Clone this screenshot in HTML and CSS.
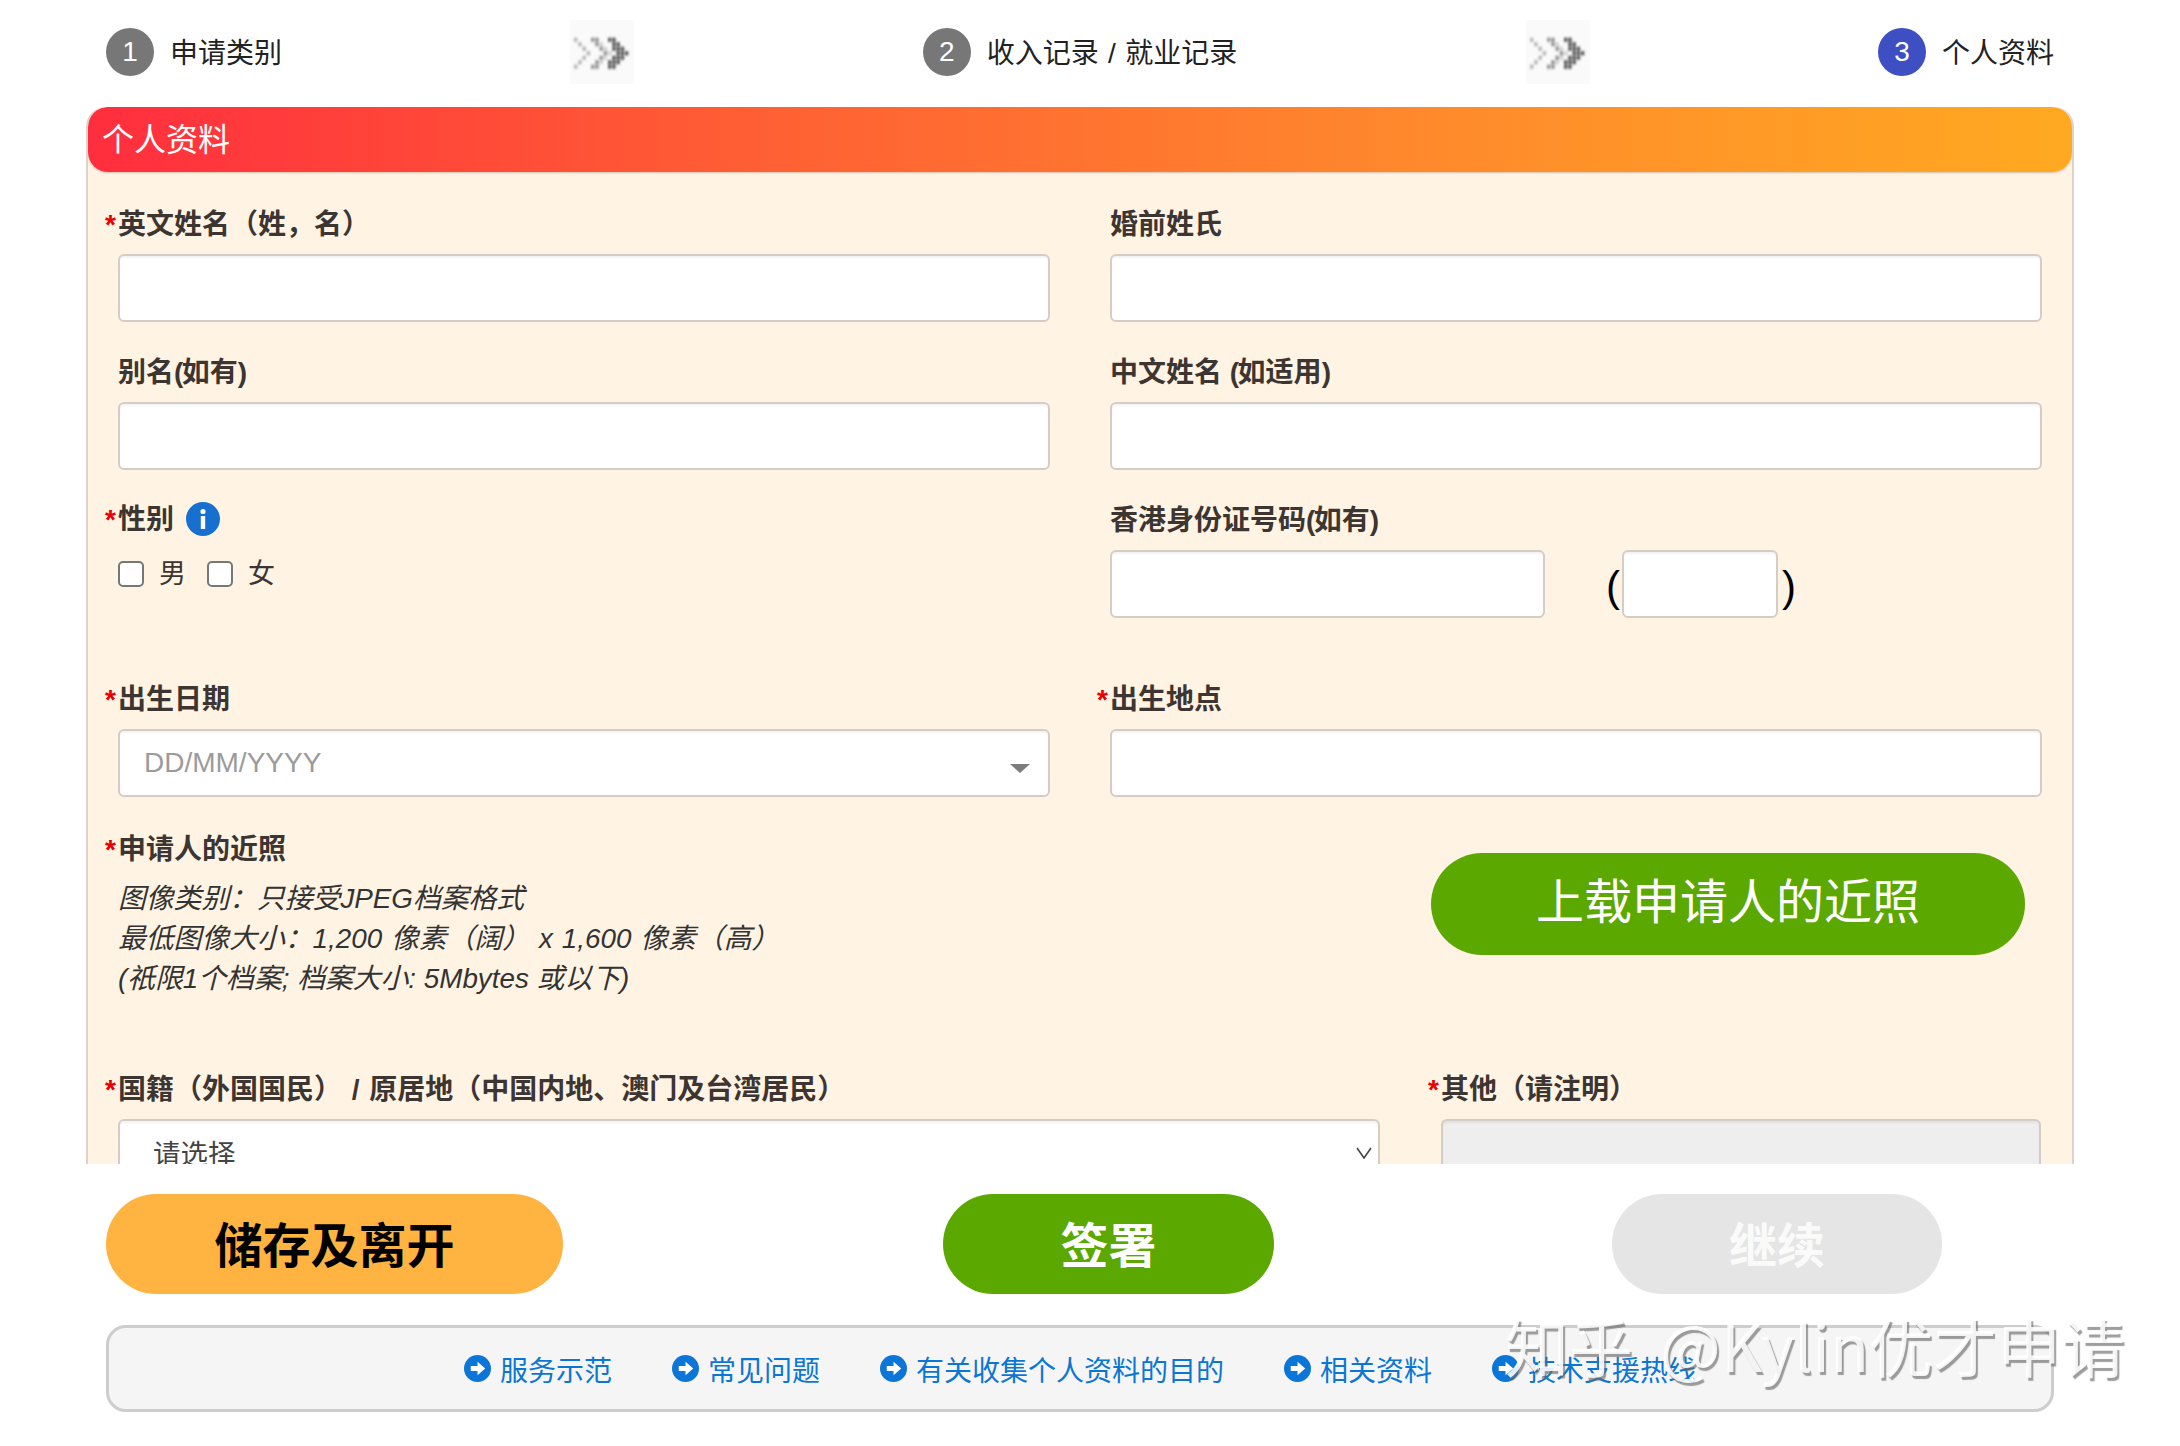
FILE: index.html
```html
<!DOCTYPE html>
<html lang="zh-CN">
<head>
<meta charset="utf-8">
<title>个人资料</title>
<link rel="stylesheet" href="styles.css">
</head>
<body>
<svg class="defs" width="0" height="0" aria-hidden="true">
  <symbol id="chev" viewBox="0 0 64 64">
    <rect width="64" height="64" fill="#fafafa"/>
    <g class="chev-dots" transform="translate(4 18) scale(4.25 4.5)">
      <path fill="#a8a8a8" d="M0 0h.8v.8h-.8zM1 1h.8v.8h-.8zM2 2h.8v.8h-.8zM3 3h.8v.8h-.8zM2 4h.8v.8h-.8zM1 5h.8v.8h-.8zM0 6h.8v.8h-.8z"/>
      <path fill="#c8c8c8" d="M6 1h.8v.8h-.8zM7 2h.8v.8h-.8zM8 3h.8v.8h-.8zM7 4h.8v.8h-.8zM6 5h.8v.8h-.8z"/>
      <path fill="#808080" d="M4 0h.8v.8h-.8zM5 0h.8v.8h-.8zM5 1h.8v.8h-.8zM6 2h.8v.8h-.8zM7 3h.8v.8h-.8zM6 4h.8v.8h-.8zM5 5h.8v.8h-.8zM4 6h.8v.8h-.8zM5 6h.8v.8h-.8z"/>
      <path fill="#3c3c3c" d="M8 0h.8v.8h-.8zM9 0h.8v.8h-.8zM9 1h.8v.8h-.8zM10 1h.8v.8h-.8zM9 2h.8v.8h-.8zM10 2h.8v.8h-.8zM11 2h.8v.8h-.8zM10 3h.8v.8h-.8zM11 3h.8v.8h-.8zM12 3h.8v.8h-.8zM9 4h.8v.8h-.8zM10 4h.8v.8h-.8zM11 4h.8v.8h-.8zM8 5h.8v.8h-.8zM9 5h.8v.8h-.8zM10 5h.8v.8h-.8zM8 6h.8v.8h-.8zM9 6h.8v.8h-.8z"/>
    </g>
  </symbol>
  <symbol id="go" viewBox="0 0 28 28">
    <circle cx="14" cy="14" r="14" fill="#0b76d8"/>
    <path d="M7 11.5h7V7l8 7-8 7v-4.500H7z" fill="#fff"/>
  </symbol>
</svg>
<div class="page">
  <nav class="steps">
    <div class="step"><span class="num">1</span><span class="step-text">申请类别</span></div>
    <svg class="chev"><use href="#chev"/></svg>
    <div class="step"><span class="num">2</span><span class="step-text step-wide">收入记录 / 就业记录</span></div>
    <svg class="chev"><use href="#chev"/></svg>
    <div class="step"><span class="num num-on">3</span><span class="step-text">个人资料</span></div>
  </nav>

  <section class="panel">
    <h1 class="panel-title">个人资料</h1>
    <form class="form">
      <div class="row two">
        <div class="field"><div class="label"><i class="star">*</i>英文姓名（姓，名）</div><input class="box" type="text"></div>
        <div class="field"><div class="label">婚前姓氏</div><input class="box" type="text"></div>
      </div>
      <div class="row two">
        <div class="field"><div class="label">别名<span class="tp">(</span>如有<span class="tp">)</span></div><input class="box" type="text"></div>
        <div class="field"><div class="label">中文姓名 <span class="tp">(</span>如适用<span class="tp">)</span></div><input class="box" type="text"></div>
      </div>
      <div class="row two row-tall">
        <div class="field">
          <div class="label label-icon"><span><i class="star">*</i>性别</span>
            <svg class="info" viewBox="0 0 34 34"><circle cx="17" cy="17" r="17" fill="#176fcf"/><circle cx="17" cy="9.500" r="2.600" fill="#fff"/><rect x="14.800" y="14" width="4.400" height="13" fill="#fff"/></svg>
          </div>
          <div class="checks">
            <label class="check"><input type="checkbox">男</label>
            <label class="check"><input type="checkbox">女</label>
          </div>
        </div>
        <div class="field">
          <div class="label">香港身份证号码<span class="tp">(</span>如有<span class="tp">)</span></div>
          <div class="hkid">
            <input class="box box-id" type="text">
            <span class="paren paren-l">(</span>
            <input class="box box-check" type="text">
            <span class="paren">)</span>
          </div>
        </div>
      </div>
      <div class="row two">
        <div class="field"><div class="label"><i class="star">*</i>出生日期</div>
          <div class="control">
            <input class="box date" type="text" placeholder="DD/MM/YYYY">
            <span class="caret"></span>
          </div>
        </div>
        <div class="field"><div class="label"><i class="star">*</i>出生地点</div><input class="box" type="text"></div>
      </div>
      <div class="row photo">
        <div class="photo-info">
          <div class="label"><i class="star">*</i>申请人的近照</div>
          <p class="note">图像类别：只接受JPEG档案格式<br><span class="note-wide">最低图像大小：1,200 像素（阔） x 1,600 像素（高）</span><br>(祇限1个档案; 档案大小: 5Mbytes 或以下)</p>
        </div>
        <button class="pill upload" type="button">上载申请人的近照</button>
      </div>
      <div class="row nat">
        <div class="field"><div class="label label-wide"><i class="star">*</i>国籍（外国国民） / 原居地（中国内地、澳门及台湾居民）</div>
          <div class="control">
            <select class="box sel"><option>请选择</option></select>
            <svg class="chevron" viewBox="0 0 16 12"><path d="M1 1l7 10 7-10" fill="none" stroke="#444" stroke-width="1.600"/></svg>
          </div>
        </div>
        <div class="field"><div class="label"><i class="star">*</i>其他（请注明）</div><input class="box off" type="text" disabled></div>
      </div>
    </form>
  </section>

  <div class="bottom">
    <div class="actions">
      <button class="pill save" type="button">储存及离开</button>
      <button class="pill sign" type="button">签署</button>
      <button class="pill next" type="button">继续</button>
    </div>
    <div class="links">
      <a class="link"><svg class="go"><use href="#go"/></svg>服务示范</a>
      <a class="link"><svg class="go"><use href="#go"/></svg>常见问题</a>
      <a class="link"><svg class="go"><use href="#go"/></svg>有关收集个人资料的目的</a>
      <a class="link"><svg class="go"><use href="#go"/></svg>相关资料</a>
      <a class="link"><svg class="go"><use href="#go"/></svg>技术支援热线</a>
    </div>
  </div>
  <div class="mark">知乎 @Kylin优才申请</div>
</div>
</body>
</html>
```
FILE: styles.css
```css
* { box-sizing: border-box; }
html, body { margin: 0; padding: 0; background: #fff; }
body { font-family: "Liberation Sans", "Noto Sans CJK SC", sans-serif; color: #333; }
.defs { position: absolute; }
.page { position: relative; width: 2180px; height: 1446px; overflow: hidden; display: flex; flex-direction: column; }

.steps { height: 107px; flex: none; padding: 20px 126px 0 106px; display: flex; justify-content: space-between; align-items: flex-start; }
.step { height: 64px; display: flex; align-items: center; gap: 16px; font-size: 28px; color: #222; }
.step-text { padding-bottom: 3px; }
.step-wide { word-spacing: 1.500px; }
.num { width: 48px; height: 48px; border-radius: 50%; background: #777; color: #fff; display: flex; align-items: center; justify-content: center; }
.num-on { background: #3d4fc2; }
.chev { width: 64px; height: 64px; display: block; }
.chev-dots { filter: blur(.3px); }

.panel { height: 1057px; flex: none; width: 1988px; margin-left: 86px; overflow: hidden; background: #fff3e4; border: solid #dcd4cb; border-width: 0 2px; border-radius: 20px 20px 0 0; }
.panel-title { margin: 0; height: 65px; padding-left: 14px; border-radius: 20px; font-size: 32px; font-weight: 400; line-height: 67px; color: #fff; background: linear-gradient(90deg, #ff2e3e 0%, #ff5a35 30%, #ff8a2c 68%, #ffa921 100%); box-shadow: 0 1px 2px rgba(120, 90, 60, .35); }
.form { padding: 32px 30px 0 30px; }

.row { margin-bottom: 30px; }
.two { display: grid; grid-template-columns: 1fr 1fr; column-gap: 60px; }
.row-tall { height: 149px; }
.label { height: 40px; margin-bottom: 10px; font-size: 28px; font-weight: 700; line-height: 42px; color: #3c3531; white-space: nowrap; }
.label-wide { word-spacing: 2px; }
.tp { letter-spacing: -1.500px; }
.star { display: inline-block; width: 13px; margin-left: -13px; font-style: normal; color: #e60000; }
.label-icon { display: flex; align-items: center; gap: 12px; }
.info { width: 34px; height: 34px; display: block; margin-top: -2px; }

.box { display: block; width: 100%; height: 68px; background: #fff; border: 2px solid #d3cdc6; border-radius: 6px; box-shadow: inset 0 2px 2px rgba(0, 0, 0, .05); outline: none; font-family: inherit; font-size: 28px; }
.control { position: relative; }
.date { padding: 0 24px; }
.date::placeholder { color: #9b9b9b; opacity: 1; }
.caret { position: absolute; right: 20px; top: 35px; width: 0; height: 0; border: solid transparent; border-width: 9px 10px 0; border-top-color: #7d7d7d; }
.sel { appearance: none; padding: 2px 0 0 33px; color: #444; font-size: 27.500px; }
.chevron { position: absolute; right: 8px; top: 28px; width: 16px; height: 12px; }

.checks { display: flex; gap: 21px; margin-top: 21px; }
.check { display: flex; align-items: center; gap: 15px; font-size: 27px; line-height: 26px; color: #3c3531; }
.check input { appearance: none; width: 26px; height: 26px; margin: 0; background: #fff; border: 2px solid #777; border-radius: 5px; }

.hkid { display: flex; align-items: center; }
.box-id { width: 435px; }
.box-check { width: 156px; margin: 0 4px 0 2px; }
.paren { font-size: 42px; line-height: 48px; color: #000; padding-top: 6px; }
.paren-l { margin-left: 61px; }

.photo { height: 210px; margin-top: 32px; display: flex; justify-content: space-between; padding-right: 17px; }
.note { margin: 0; font-size: 27.800px; font-style: italic; line-height: 40px; color: #333; }
.note-wide { word-spacing: 1.200px; }
.pill { border: 0; border-radius: 51px; font-family: inherit; padding: 0; }
.upload { width: 594px; height: 102px; margin-top: 24px; padding-bottom: 13px; background: #5aa800; color: #fff; font-size: 48px; }

.nat { display: grid; grid-template-columns: 1262px 600px; column-gap: 61px; }
.off { background: #eee; }

.bottom { flex: 1; background: #fff; padding: 30px 126px 0 106px; }
.actions { height: 100px; display: flex; }
.actions .pill { height: 100px; border-radius: 50px; padding-bottom: 4px; font-size: 48px; font-weight: 700; }
.save { width: 457px; background: #ffb340; color: #000; }
.sign { width: 331px; margin-left: 380px; background: #5aa800; color: #fff; }
.next { width: 330px; margin-left: 338px; background: #e5e5e5; color: #fafafa; }

.links { height: 87px; margin-top: 31px; display: flex; align-items: center; justify-content: center; gap: 60px; background: #f5f5f5; border: 3px solid #cdcdcd; border-radius: 20px; }
.link { display: flex; align-items: center; gap: 9px; font-size: 28px; color: #0b76d3; white-space: nowrap; }
.go { width: 27px; height: 27px; display: block; }

.mark { position: absolute; left: 1505px; top: 1299px; font-family: "Noto Sans CJK SC", sans-serif; font-size: 64px; word-spacing: 13px; line-height: 90px; color: rgba(255, 255, 255, .88); text-shadow: 2px 3px 1px rgba(105, 105, 105, .65); white-space: nowrap; pointer-events: none; }
```
